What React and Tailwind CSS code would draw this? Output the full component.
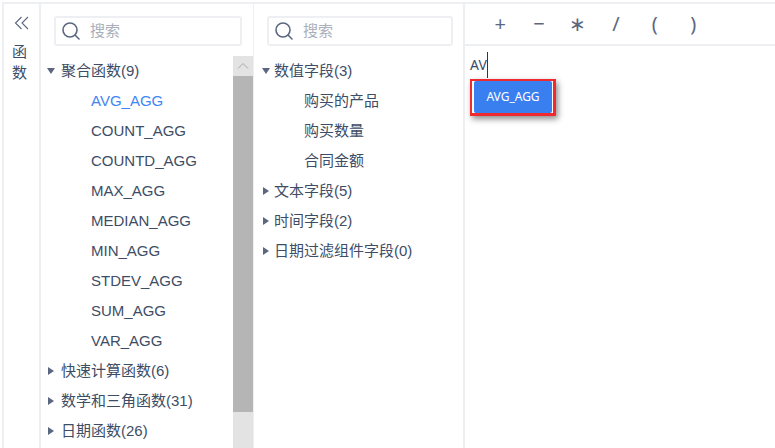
import React from "react";

const FONT = "font-['Liberation_Sans','Noto_Sans_CJK_SC',sans-serif]";
const NOTO = "font-['Noto_Sans','Noto_Sans_CJK_SC',sans-serif]";

function Search({ className }) {
  return (
    <div className={"flex items-center h-[30px] border-2 border-[#eeeff3] rounded-[3px] pl-[5px] " + className}>
      <svg width="20" height="20" viewBox="0 0 20 20" fill="none" stroke="#5b6780" strokeWidth="1.6" className="shrink-0">
        <circle cx="9" cy="9" r="7" />
        <path d="M14 14l4 4" strokeLinecap="round" />
      </svg>
      <span className="ml-[9px] text-[15px] text-[#a9afbb]">搜索</span>
    </div>
  );
}

function Down() {
  return <span className="w-0 h-0 border-x-[4.5px] border-x-transparent border-t-[6px] border-t-[#5b6780]" />;
}

function Right() {
  return <span className="w-0 h-0 border-y-[4.5px] border-y-transparent border-l-[6px] border-l-[#5b6780]" />;
}

function Group({ open, label, wrap }) {
  return (
    <div className="flex items-center h-[30px] text-[15px] text-[#3d4d66]">
      <span className={"flex justify-center shrink-0 w-[15px] " + wrap}>{open ? <Down /> : <Right />}</span>
      <span className="whitespace-nowrap">{label}</span>
    </div>
  );
}

function Item({ label, active, pad }) {
  return (
    <div className={"flex items-center h-[30px] text-[15px] whitespace-nowrap " + pad + " " + (active ? "text-[#3f86f5]" : "text-[#3d4d66]")}>
      {label}
    </div>
  );
}

const fns = ["AVG_AGG", "COUNT_AGG", "COUNTD_AGG", "MAX_AGG", "MEDIAN_AGG", "MIN_AGG", "STDEV_AGG", "SUM_AGG", "VAR_AGG"];
const ops = ["+", "−", "∗", "/", "(", ")"];
const W2 = "ml-[1px] mr-[3px]";
const W3 = "mr-[1px]";

export default function App() {
  return (
    <div className={"w-[775px] h-[448px] overflow-hidden bg-white pt-[2px] " + FONT}>
      <div className="h-[446px] flex border-t-2 border-[#eeeff3] ml-[2px]">
        <div className="w-[39px] shrink-0 border-x-2 border-[#eeeff3] flex flex-col items-center text-[15px] text-[#3d4d66]">
          <svg width="16" height="16" viewBox="0 0 16 16" fill="none" stroke="#5b6780" strokeWidth="1.1" className="mt-[11px]">
            <path d="M7.5 2L1.5 8l6 6M14 2L8 8l6 6" />
          </svg>
          <div className="mt-[10px] mr-[4px] leading-[21px] w-[15px] text-center">函 数</div>
        </div>

        <div className="w-[213px] shrink-0 border-r border-[#eeeff3] flex">
          <div className="w-[192px] shrink-0">
            <Search className="ml-[13px] w-[188px] mt-[12px]" />
            <div className="mt-[10px] ml-[1px] h-[400px] overflow-hidden">
              <Group open label="聚合函数(9)" wrap={W2} />
              {fns.map((f, i) => <Item key={f} label={f} active={i === 0} pad="pl-[49px]" />)}
              <Group label="快速计算函数(6)" wrap={W2} />
              <Group label="数学和三角函数(31)" wrap={W2} />
              <Group label="日期函数(26)" wrap={W2} />
            </div>
          </div>
          <div className="w-[20px] shrink-0 bg-[#e3e3e3] flex flex-col mt-[52px]">
            <div className="h-[20px] flex items-center justify-center">
              <svg width="12" height="8" viewBox="0 0 12 8" fill="none" stroke="#a8a8a8" strokeWidth="1"><path d="M1 6.5L6 1.5l5 5" /></svg>
            </div>
            <div className="h-[336px] bg-[#b5b5b5]" />
          </div>
        </div>

        <div className="w-[211px] shrink-0 border-r-2 border-[#eeeff3]">
          <Search className="ml-[13px] w-[186px] mt-[12px]" />
          <div className="mt-[10px] ml-[4px]">
            <Group open label="数值字段(3)" wrap={W3} />
            {["购买的产品", "购买数量", "合同金额"].map((f) => <Item key={f} label={f} pad="pl-[46px]" />)}
            <Group label="文本字段(5)" wrap={W3} />
            <Group label="时间字段(2)" wrap={W3} />
            <Group label="日期过滤组件字段(0)" wrap={W3} />
          </div>
        </div>

        <div className="flex-1 min-w-0">
          <div className={"h-[42px] border-b-2 border-[#eeeff3] flex items-center pl-[16px] text-[20px] text-[#5b6780] " + NOTO}>
            {ops.map((o) => <span key={o} className="w-[38.6px] text-center">{o}</span>)}
          </div>
          <div className={"relative pl-[5px] pt-[6px] " + NOTO}>
            <div className="flex items-start h-[26px]">
              <span className="text-[14px] text-[#3d4d66] leading-[26px]">AV</span>
              <span className="w-px h-[26px] bg-[#2c3648]" />
            </div>
            <div className="absolute left-[5px] top-[33px] w-[86px] h-[37px] border-l-2 border-t-2 border-r-[3px] border-b-[3px] border-[#f02a2f] pl-[2px] pr-[1px] bg-white shadow-[2px_3px_6px_rgba(0,0,0,0.45)]">
              <div className="w-full h-full rounded-[2px] bg-[#3a7ff0] flex items-center justify-center text-[12px] text-white">AVG_AGG</div>
            </div>
          </div>
        </div>
      </div>
    </div>
  );
}
